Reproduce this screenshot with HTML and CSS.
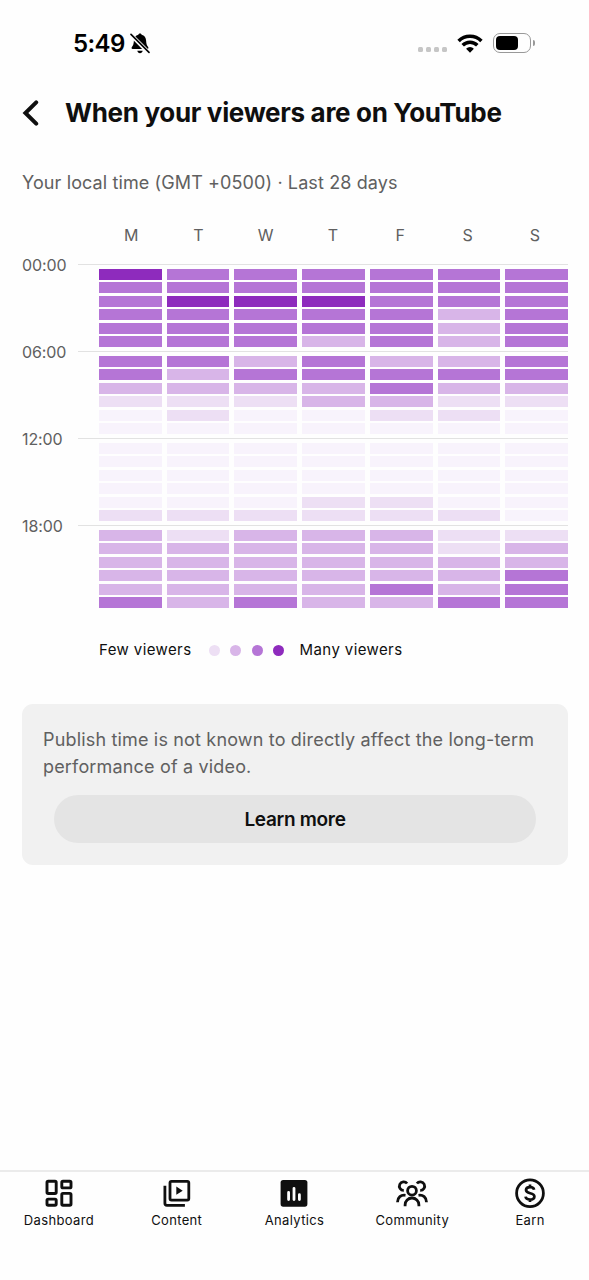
FILE: index.html
```
<!DOCTYPE html>
<html lang="en">
<head>
    <meta charset="UTF-8">
    <meta name="viewport" content="width=device-width, initial-scale=1.0">
    <title>When your viewers are on YouTube</title>
    <link rel="stylesheet" href="styles.css">
</head>
<body>
    <div class="status-bar">
        <span class="time">5:49</span>
        <svg class="bell-icon" viewBox="0 0 20 21" width="20" height="21">
            <path d="M10 .5c1 0 1.6.7 1.6 1.3 2.9.8 4.300 2.900 4.500 5.800.2 3.700.7 5 2 6.300.7.8.4 2-.8 2H2.700c-1.200 0-1.500-1.200-.8-2 1.300-1.300 1.800-2.600 2-6.300.2-2.900 1.600-5 4.500-5.800C8.400 1.200 9 .5 10 .5z"/>
            <path d="M7.300 17.800h5.400c-.3 1.500-1.300 2.400-2.700 2.400s-2.400-.9-2.700-2.400z"/>
            <path d="M.5 1.500l18 18" stroke="#fefefe" stroke-width="4"/>
            <path d="M1 1.400l18 18" stroke="#000" stroke-width="1.6" stroke-linecap="round"/>
        </svg>
        <div class="status-right">
            <div class="signal"><i></i><i></i><i></i><i></i></div>
            <svg class="wifi-icon" viewBox="0 0 26 19" width="26" height="19">
                <g fill="none" stroke="#000" stroke-width="3.5">
                    <path d="M1.600 7a16.200 16.200 0 0 1 22.800 0"/>
                    <path d="M5.700 11.300a10.300 10.300 0 0 1 14.600 0"/>
                </g>
                <path d="M9.100 14.700a5.600 5.600 0 0 1 7.800 0L13 18.700z"/>
            </svg>
            <div class="battery"><div class="battery-level"></div></div>
        </div>
    </div>

    <header>
        <svg class="back-icon" viewBox="0 0 18 28" width="18" height="28">
            <path d="M15.200 3.300L4.400 14l10.800 10.700" fill="none" stroke="#0f0f0f" stroke-width="4" stroke-linecap="round"/>
        </svg>
        <h1>When your viewers are on YouTube</h1>
    </header>

    <main>
        <p class="subtitle">Your local time (GMT +0500) · Last 28 days</p>

        <div class="days">
            <span>M</span><span>T</span><span>W</span><span>T</span><span>F</span><span>S</span><span>S</span>
        </div>
        <div id="heatmap"></div>

        <div class="legend">
            <span class="legend-few">Few viewers</span>
            <i class="dot level-1"></i>
            <i class="dot level-2"></i>
            <i class="dot level-3"></i>
            <i class="dot level-4"></i>
            <span class="legend-many">Many viewers</span>
        </div>

        <div class="notice">
            <p>Publish time is not known to directly affect the long-term performance of a video.</p>
            <button class="learn-more">Learn more</button>
        </div>
    </main>

    <nav>
        <a class="tab">
            <svg viewBox="0 0 32 32" width="32" height="32">
                <g fill="none" stroke="#0f0f0f" stroke-width="2.9">
                    <rect x="4" y="4.300" width="9.200" height="12.200" rx="1.2"/>
                    <rect x="18.800" y="4.300" width="9.200" height="6.600" rx="1.2"/>
                    <rect x="4" y="22.100" width="9.200" height="6.200" rx="1.2"/>
                    <rect x="18.800" y="16.400" width="9.200" height="11.900" rx="1.2"/>
                </g>
            </svg>
            <span>Dashboard</span>
        </a>
        <a class="tab">
            <svg viewBox="0 0 32 32" width="32" height="32">
                <g fill="none" stroke="#0f0f0f" stroke-width="2.8">
                    <rect x="9" y="4.300" width="18.800" height="18.800" rx="1.5"/>
                    <path d="M3.900 8.800v17.500a2 2 0 0 0 2 2h18"/>
                </g>
                <path d="M15.300 9.600v8.200l6.400-4.100z" fill="#0f0f0f"/>
            </svg>
            <span>Content</span>
        </a>
        <a class="tab">
            <svg viewBox="0 0 32 32" width="32" height="32">
                <rect x="2.600" y="2.900" width="26.800" height="26.800" rx="2.6" fill="#0f0f0f"/>
                <path d="M10.600 15.500v7M16 11.300v11.200M21.400 17.700v4.800" stroke="#fff" stroke-width="2.8" stroke-linecap="round"/>
            </svg>
            <span>Analytics</span>
        </a>
        <a class="tab">
            <svg viewBox="0 0 32 32" width="32" height="32">
                <g fill="none" stroke="#0f0f0f" stroke-width="2.8">
                    <circle cx="16" cy="13.700" r="4.400"/>
                    <path d="M9.100 29.300v-1.400a6.900 6.900 0 0 1 13.800 0v1.400"/>
                    <path d="M11.100 6.500a4.300 4.300 0 1 0-3.300 6.900M20.900 6.500a4.300 4.300 0 1 1 3.300 6.900"/>
                    <path d="M1.500 25.200c0-4.800 3.500-7.600 8-6.900M30.500 25.200c0-4.800-3.500-7.600-8-6.900"/>
                </g>
            </svg>
            <span>Community</span>
        </a>
        <a class="tab">
            <svg viewBox="0 0 32 32" width="32" height="32">
                <g fill="none" stroke="#0f0f0f">
                    <circle cx="16" cy="16.300" r="13.400" stroke-width="2.8"/>
                    <path d="M20.100 12.800c-.3-1.700-1.900-2.600-4.100-2.600-2.400 0-4 1-4 2.900 0 4.300 8.400 1.900 8.400 6.300 0 2-1.800 3.100-4.400 3.100-2.500 0-4.200-1-4.500-2.900M16 7.600v3M16 22v3" stroke-width="2.7"/>
                </g>
            </svg>
            <span>Earn</span>
        </a>
    </nav>

    <script>
        const heatmap = document.getElementById('heatmap');

        // one string per hour, one digit per day (0 = fewest viewers, 4 = most)
        const hours = [
            '4333333', '3333333', '3444333', '3333323', '3333323', '3332323',
            '3323223', '3233333', '2222322', '1112211', '0100110', '0000000',
            '0000000', '0000000', '0000000', '0000000', '0001100', '1111110',
            '2122211', '2222212', '2222222', '2222223', '2222323', '3232233'
        ];

        for (let start = 0; start < 24; start += 6) {
            const block = document.createElement('div');
            block.classList.add('block');
            const cells = hours.slice(start, start + 6).join('').split('')
                .map(level => `<div class="level-${level}"></div>`).join('');
            block.innerHTML = `
                <span class="hour">${String(start).padStart(2, '0')}:00</span>
                <div class="block-body">
                    <div class="cells">${cells}</div>
                </div>
            `;
            heatmap.appendChild(block);
        }
    </script>
</body>
</html>
```
FILE: styles.css
```
* {
    box-sizing: border-box;
}

body {
    font-family: Inter, "Liberation Sans", sans-serif;
    margin: 0;
    height: 1280px;
    display: flex;
    flex-direction: column;
    background-color: #fefefe;
    color: #0f0f0f;
    overflow: hidden;
}

.status-bar {
    display: flex;
    align-items: center;
    height: 86px;
    padding: 0 58px 0 73px;
}

.time {
    font-size: 24px;
    font-weight: 600;
    letter-spacing: -0.6px;
    color: #000;
}

.bell-icon {
    margin: 1px 0 0 5px;
}

.status-right {
    display: flex;
    align-items: center;
    margin-left: auto;
}

.signal {
    display: flex;
    gap: 3px;
    margin: 12px 10px 0 0;
}

.signal i {
    width: 5px;
    height: 5px;
    border-radius: 1.5px;
    background-color: #c6c6c6;
}

.battery {
    position: relative;
    display: flex;
    align-items: center;
    width: 38px;
    height: 20px;
    margin-left: 10px;
    padding-left: 2px;
    border: 1.5px solid #999;
    border-radius: 7px;
}

.battery::after {
    content: "";
    position: absolute;
    right: -4.5px;
    top: 6px;
    width: 2px;
    height: 6px;
    border-radius: 0 2px 2px 0;
    background-color: #999;
}

.battery-level {
    width: 22px;
    height: 14px;
    border-radius: 4px;
    background-color: #000;
}

header {
    display: flex;
    align-items: center;
    height: 53px;
    padding-left: 21px;
}

h1 {
    margin: 0 0 0 26px;
    font-size: 26px;
    font-weight: 700;
    letter-spacing: -0.32px;
    white-space: nowrap;
}

main {
    flex: 1;
    padding: 0 21px 0 22px;
}

.subtitle {
    margin: 30px 0 0;
    font-size: 18px;
    letter-spacing: 0.11px;
    line-height: 27px;
    color: #606060;
    white-space: nowrap;
}

.days {
    display: grid;
    grid-template-columns: repeat(7, 1fr);
    column-gap: 5px;
    margin: 28px 2px 0 78px;
    font-size: 16px;
    line-height: 22px;
    text-align: center;
    color: #606060;
}

#heatmap {
    margin-top: 18px;
}

.block {
    display: flex;
    height: 87px;
}

.hour {
    width: 56px;
    font-size: 16px;
    letter-spacing: -0.1px;
    line-height: 20px;
    margin-top: -9px;
    color: #606060;
}

.block-body {
    flex: 1;
    padding: 4px 0 0 21px;
    border-top: 1px solid #e2e2e2;
}

.cells {
    display: grid;
    grid-template-columns: repeat(7, 1fr);
    grid-auto-rows: 11px;
    gap: 2.4px 5.2px;
}

.level-0 { background-color: #f8f3fc; }
.level-1 { background-color: #eddff4; }
.level-2 { background-color: #d8b5e8; }
.level-3 { background-color: #b575d6; }
.level-4 { background-color: #8e2bbd; }

.legend {
    display: flex;
    align-items: center;
    margin: 27px 0 0 77px;
    font-size: 15px;
    letter-spacing: 0.4px;
    line-height: 22px;
}

.legend-few {
    width: 110px;
}

.dot {
    width: 11px;
    height: 11px;
    margin-right: 10.4px;
    border-radius: 50%;
}

.legend-many {
    margin-left: 5px;
}

.notice {
    height: 161px;
    margin-top: 43px;
    padding: 22px 21px;
    border-radius: 11px;
    background-color: #f1f1f1;
}

.notice p {
    margin: 0;
    font-size: 18px;
    letter-spacing: 0.17px;
    line-height: 27px;
    color: #606060;
}

.learn-more {
    display: block;
    width: 482px;
    height: 48px;
    margin: 15px 0 0 11px;
    padding: 0;
    border: none;
    border-radius: 24px;
    background-color: #e4e4e4;
    color: #0f0f0f;
    font-family: inherit;
    font-size: 19px;
    font-weight: 600;
    letter-spacing: -0.3px;
}

nav {
    display: flex;
    height: 110px;
    border-top: 2px solid #ebebeb;
}

.tab {
    flex: 1;
    display: flex;
    flex-direction: column;
    align-items: center;
    padding-top: 5px;
    font-size: 13px;
    letter-spacing: 0.35px;
    line-height: 18px;
}

.tab span {
    margin-top: 2px;
}
```
